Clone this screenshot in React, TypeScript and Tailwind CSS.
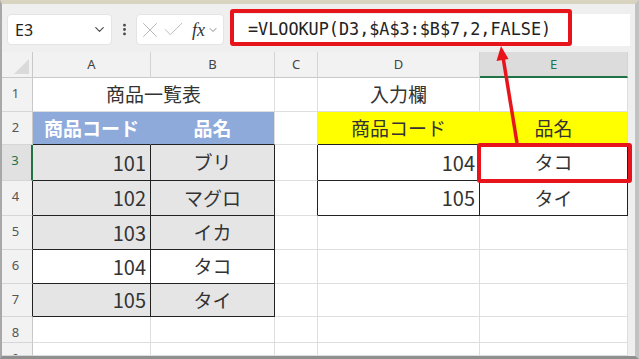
import { X, Check, ChevronDown, EllipsisVertical } from "lucide-react";
import type { ReactNode } from "react";

const jp = "font-['Noto_Sans_CJK_JP',sans-serif]";
const grid = "border-r-[#dedede]";
const gridB = "border-b-[#dedede]";

function Cell({
  children,
  r = grid,
  b = gridB,
  className = "",
}: {
  children?: ReactNode;
  r?: string;
  b?: string;
  className?: string;
}) {
  return (
    <div className={`flex items-center border-r border-b ${r} ${b} ${className}`}>
      {children}
    </div>
  );
}

function RowHead({ n, active, edge }: { n: number; active?: boolean; edge?: boolean }) {
  const right = active ? "border-r-2 border-r-[#217346]" : edge ? "border-r border-r-[#222]" : "border-r border-r-[#c9c9c9]";
  return (
    <div
      className={`flex justify-center pt-[6px] pr-[3px] overflow-hidden border-b border-b-[#d6d6d6] ${right} ${
        active ? "bg-[#e1e1e1] text-[#217346]" : "bg-[#f2f2f2] text-[#555]"
      } text-[13px] font-['Noto_Sans',sans-serif]`}
    >
      {n}
    </div>
  );
}

const products = [
  { code: 101, name: "ブリ", fill: true },
  { code: 102, name: "マグロ", fill: true },
  { code: 103, name: "イカ", fill: true },
  { code: 104, name: "タコ", fill: false },
  { code: 105, name: "タイ", fill: true },
];

const inputs: Record<number, { code: number; name: string }> = {
  0: { code: 104, name: "タコ" },
  1: { code: 105, name: "タイ" },
};

export default function App() {
  return (
    <div className="relative w-[639px] h-[359px] overflow-hidden">
      <div className="w-full h-full flex flex-col bg-[#efefef] border-t-4 border-t-[#d8d4bf] border-l-2 border-l-[#a8a8a8] border-b-[3px] border-b-[#8f8f8f] border-r-4 border-r-[#c2c2c2]">
        {/* toolbar */}
        <div className="h-[48px] shrink-0 flex items-start pt-[10px] pl-[5px]">
          <div className="w-[105px] h-[31px] bg-white rounded-[4px] border border-[#e4e4e4] flex items-center justify-between pl-[7px] pr-[4px] text-[16px] text-[#222] font-['Noto_Sans',sans-serif]">
            E3
            <ChevronDown size={15} strokeWidth={1.75} className="text-[#444]" />
          </div>
          <div className="w-[24px] h-[31px] flex items-center justify-center text-[#444]">
            <EllipsisVertical size={15} strokeWidth={2.5} />
          </div>
          <div className="w-[88px] h-[31px] bg-white rounded-[4px] border border-[#e4e4e4] flex items-center">
            <X size={26} strokeWidth={0.9} className="text-[#b8b8b8]" />
            <Check size={25} strokeWidth={0.9} className="-ml-[2px] text-[#b8b8b8]" />
            <span className="ml-[6px] italic text-[18px] leading-none font-['Liberation_Serif',serif] text-[#333]">
              fx
            </span>
            <ChevronDown size={12} strokeWidth={1.5} className="ml-[2px] text-[#666]" />
          </div>
          <div className="ml-[6px] w-[400px] h-[32px] bg-white flex items-center pl-[18px] text-[16.8px] text-[#222] font-['DejaVu_Sans_Mono',monospace]">
            =VLOOKUP(D3,$A$3:$B$7,2,FALSE)
          </div>
        </div>

        {/* sheet */}
        <div className="grid grid-cols-[31px_118px_124px_43px_162px_148px] grid-rows-[26px_34px_33px_36px_35px_34px_34px_33px_26px_13px] bg-white w-[626px]">
          {/* column headers */}
          <div className="relative bg-[#f2f2f2] border-r border-b border-r-[#c9c9c9] border-b-[#c9c9c9]">
            <div className="absolute right-[3px] bottom-[3px] w-0 h-0 border-l-[15px] border-l-transparent border-b-[15px] border-b-[#dadada]" />
          </div>
          {["A", "B", "C", "D"].map((c) => (
            <div
              key={c}
              className="flex justify-center pt-[3px] bg-[#f2f2f2] border-r border-b border-r-[#d4d4d4] border-b-[#c9c9c9] text-[13px] text-[#444] font-['Noto_Sans',sans-serif]"
            >
              {c}
            </div>
          ))}
          <div className="flex justify-center pt-[3px] bg-[#dcdcdc] border-r border-r-[#d4d4d4] border-b-2 border-b-[#217346] text-[13px] text-[#217346] font-['Noto_Sans',sans-serif]">
            E
          </div>

          {/* row 1 */}
          <RowHead n={1} />
          <Cell className={`col-span-2 justify-center text-[19px] text-[#333] ${jp}`}>商品一覧表</Cell>
          <Cell />
          <Cell className={`justify-center text-[19px] text-[#333] ${jp}`}>入力欄</Cell>
          <Cell />

          {/* row 2 */}
          <RowHead n={2} />
          <Cell r="border-r-[#8eaadb]" b="border-b-[#222]" className={`justify-center bg-[#8eaadb] text-white font-bold text-[19px] ${jp}`}>
            商品コード
          </Cell>
          <Cell b="border-b-[#222]" className={`justify-center bg-[#8eaadb] text-white font-bold text-[19px] ${jp}`}>
            品名
          </Cell>
          <Cell />
          <Cell r="border-r-[#ffff00]" b="border-b-[#222]" className={`justify-center bg-[#ffff00] text-[19px] text-[#333] ${jp}`}>
            商品コード
          </Cell>
          <Cell b="border-b-[#222]" className={`justify-center bg-[#ffff00] text-[19px] text-[#333] ${jp}`}>
            品名
          </Cell>

          {/* rows 3-7 */}
          {products.map((p, i) => {
            const inp = inputs[i];
            const bg = p.fill ? "bg-[#e5e5e5]" : "bg-white";
            return [
              <RowHead key={`h${i}`} n={i + 3} active={i === 0} edge />,
              <Cell key={`a${i}`} r="border-r-[#222]" b="border-b-[#222]" className={`justify-end pr-[4px] ${bg} text-[20px] text-[#333] ${jp}`}>
                {p.code}
              </Cell>,
              <Cell key={`b${i}`} r="border-r-[#222]" b="border-b-[#222]" className={`justify-center ${bg} text-[19px] text-[#333] ${jp}`}>
                {p.name}
              </Cell>,
              <Cell key={`c${i}`} r={inp ? "border-r-[#222]" : grid} />,
              <Cell
                key={`d${i}`}
                r={inp ? "border-r-[#222]" : grid}
                b={inp ? "border-b-[#222]" : gridB}
                className={`justify-end pr-[4px] text-[20px] text-[#333] ${jp}`}
              >
                {inp?.code}
              </Cell>,
              <Cell
                key={`e${i}`}
                r={inp ? "border-r-[#222]" : grid}
                b={inp ? "border-b-[#222]" : gridB}
                className={`justify-center text-[19px] text-[#333] ${jp}`}
              >
                {inp?.name}
              </Cell>,
            ];
          })}

          {/* rows 8-9 */}
          {[8, 9].map((n) => [
            <RowHead key={`h${n}`} n={n} />,
            <Cell key={`a${n}`} />,
            <Cell key={`b${n}`} />,
            <Cell key={`c${n}`} />,
            <Cell key={`d${n}`} />,
            <Cell key={`e${n}`} />,
          ])}
        </div>
      </div>

      {/* annotations */}
      <div className="absolute left-[230px] top-[9px] w-[342px] h-[37px] border-4 border-[#e8141c] rounded-[3px]" />
      <div className="absolute left-[477px] top-[143px] w-[155px] h-[40px] border-4 border-[#e8141c] rounded-[3px]" />
      <svg className="absolute inset-0 pointer-events-none" width="639" height="359">
        <line x1="503" y1="57" x2="517" y2="143" stroke="#e8141c" strokeWidth="3.5" />
        <polygon points="501,46 508.5,59 496.5,61" fill="#e8141c" />
      </svg>
    </div>
  );
}
